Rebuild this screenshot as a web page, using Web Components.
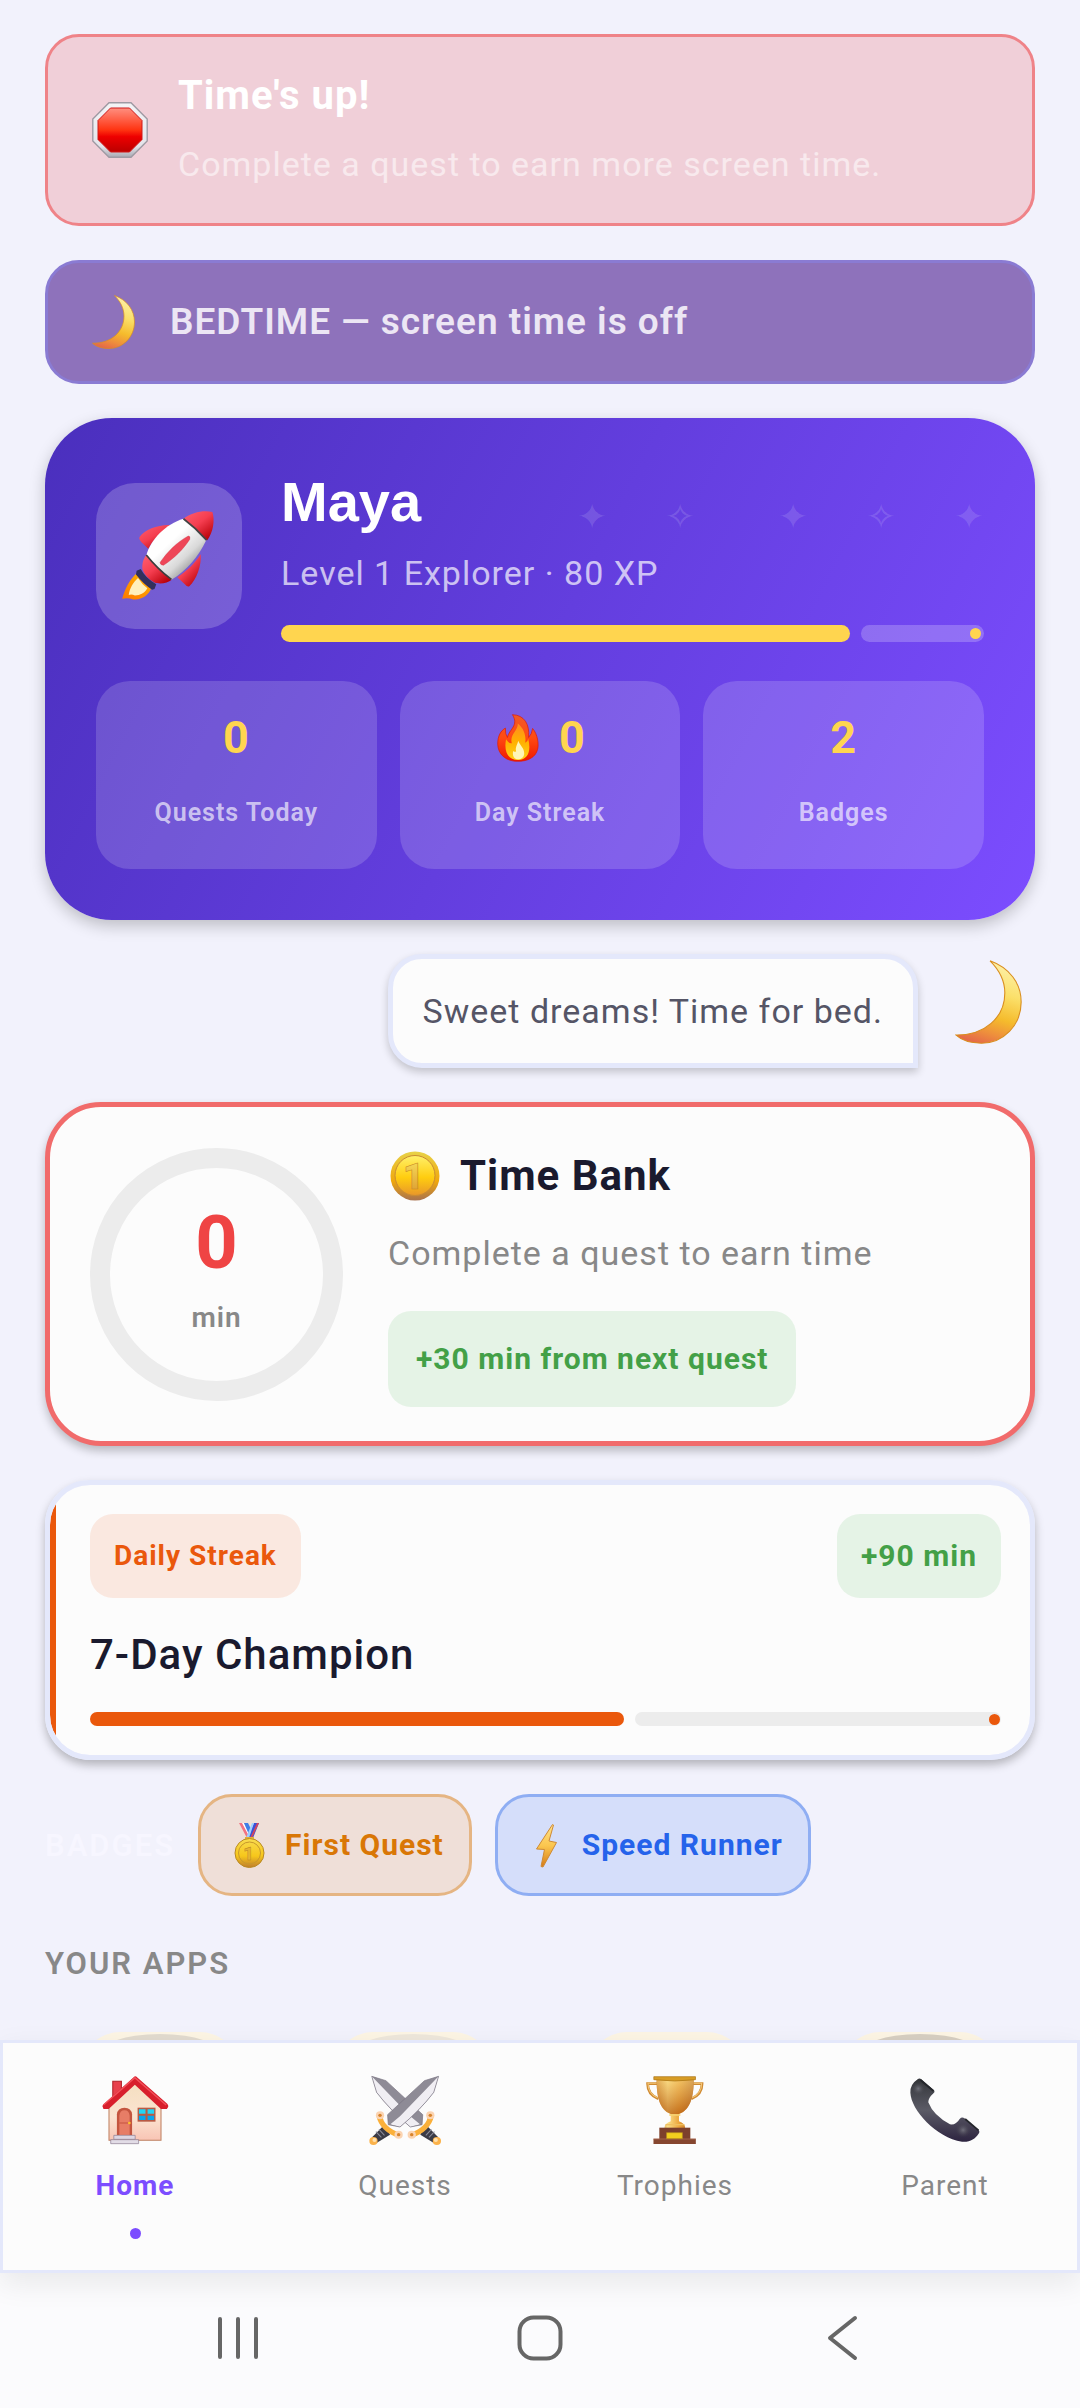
<!DOCTYPE html>
<html lang="en">
<head>
<meta charset="utf-8">
<meta name="viewport" content="width=device-width, initial-scale=1">
<title>Quest Home</title>
<style>
  html, body {
    height: 100%;
    margin: 0;
  }

  body {
    --border: #e4e8fb;
    --surface: #fcfcfc;
    --muted: #888888;
    --ink: #1a1a2e;
    --purple: #7c4dff;
    --gold: #ffd54f;
    --orange: #ea580c;
    background: #f2f2fc;
    color: var(--ink);
    font-family: Roboto, "Liberation Sans", sans-serif;
    letter-spacing: 1px;
  }
</style>
</head>
<body>
<quest-app>
  <alert-banner tone="danger">
    <emoji-icon slot="icon" name="stop"></emoji-icon>
    <span slot="title">Time's up!</span>
    <span slot="text">Complete a quest to earn more screen time.</span>
  </alert-banner>

  <alert-banner tone="night">
    <emoji-icon slot="icon" name="moon"></emoji-icon>
    <span slot="title">BEDTIME — screen time is off</span>
  </alert-banner>

  <hero-card>
    <emoji-icon slot="avatar" name="rocket"></emoji-icon>
    <span slot="name">Maya</span>
    <span slot="level">Level 1 Explorer · 80 XP</span>
    <stat-tile>0<span slot="label">Quests Today</span></stat-tile>
    <stat-tile><emoji-icon name="fire"></emoji-icon>0<span slot="label">Day Streak</span></stat-tile>
    <stat-tile>2<span slot="label">Badges</span></stat-tile>
  </hero-card>

  <speech-bubble>Sweet dreams! Time for bed.<emoji-icon slot="speaker" name="moon"></emoji-icon></speech-bubble>

  <time-bank minutes="0">
    <emoji-icon slot="icon" name="coin"></emoji-icon>
    <span slot="title">Time Bank</span>
    <span slot="text">Complete a quest to earn time</span>
    <span slot="reward">+30 min from next quest</span>
  </time-bank>

  <quest-card>
    <span slot="kind">Daily Streak</span>
    <span slot="reward">+90 min</span>
    <span slot="title">7-Day Champion</span>
  </quest-card>

  <badge-row>
    <badge-chip tone="amber"><emoji-icon slot="icon" name="medal"></emoji-icon>First Quest</badge-chip>
    <badge-chip tone="blue"><emoji-icon slot="icon" name="bolt"></emoji-icon>Speed Runner</badge-chip>
  </badge-row>

  <app-section>YOUR APPS</app-section>

  <nav-bar slot="nav">
    <nav-item active href="#home"><emoji-icon slot="icon" name="house"></emoji-icon>Home</nav-item>
    <nav-item href="#quests"><emoji-icon slot="icon" name="swords"></emoji-icon>Quests</nav-item>
    <nav-item href="#trophies"><emoji-icon slot="icon" name="trophy"></emoji-icon>Trophies</nav-item>
    <nav-item href="#parent"><emoji-icon slot="icon" name="phone"></emoji-icon>Parent</nav-item>
  </nav-bar>
  <system-bar slot="nav"></system-bar>
</quest-app>

<script>
// Small helper: every element clones its own template into an open shadow root.
function makeTemplate(html) {
  const template = document.createElement('template');
  template.innerHTML = html;
  return template;
}

class BaseElement extends HTMLElement {
  constructor() {
    super();
    const shadow = this.attachShadow({ mode: 'open' });
    shadow.appendChild(this.constructor.template.content.cloneNode(true));
  }
}

// ---------- icons ----------
const ICONS = {
  stop: `<svg viewBox="0 0 56 56">
    <defs>
      <linearGradient id="rim" x2="0" y2="1"><stop offset="0" stop-color="#f4f4f6"/><stop offset=".8" stop-color="#e4e4ea"/><stop offset="1" stop-color="#a9a9b3"/></linearGradient>
      <linearGradient id="red" x2="0" y2="1"><stop offset="0" stop-color="#ff8f80"/><stop offset=".5" stop-color="#ff3311"/><stop offset=".65" stop-color="#ee0000"/><stop offset="1" stop-color="#bb0000"/></linearGradient>
    </defs>
    <path d="M17 .8h22L55.2 17v22L39 55.2H17L.8 39V17Z" fill="url(#rim)" stroke="#9f9aa3" stroke-width="1.4"/>
    <path d="M18.500 6h19L50 18.500v19L37.500 50h-19L6 37.500v-19Z" fill="url(#red)" stroke="#d01818"/>
  </svg>`,

  moon: `<svg viewBox="0 0 43 54">
    <defs>
      <linearGradient id="m" x1=".6" y1="0" x2=".35" y2="1"><stop offset="0" stop-color="#fdf0a8"/><stop offset=".35" stop-color="#fbe06a"/><stop offset=".65" stop-color="#f5bb2c"/><stop offset=".85" stop-color="#ee8f3c"/><stop offset="1" stop-color="#e56a48"/></linearGradient>
    </defs>
    <path d="M22.500.5C35 5 42.500 15 42.500 27 42.500 42 31 53.500 17 53.500 10 53.500 4 51.500.5 48.200 19 48.500 32 37 32 21 32 13 28 6 22.500.5Z" fill="url(#m)" stroke="#d98e1f" stroke-width=".7"/>
  </svg>`,

  rocket: `<svg viewBox="192 241 424 424">
    <defs>
      <linearGradient id="rr" x2=".8" y2="1"><stop offset="0" stop-color="#ff6070"/><stop offset=".5" stop-color="#f53e50"/><stop offset="1" stop-color="#b80008"/></linearGradient>
      <linearGradient id="rw" x1=".2" y1=".2" x2=".8" y2=".85"><stop offset=".3" stop-color="#ffffff"/><stop offset=".7" stop-color="#d9d9d9"/><stop offset="1" stop-color="#8d8d8d"/></linearGradient>
      <linearGradient id="rf" x1=".8" x2=".1" y2="1"><stop offset="0" stop-color="#ffb300"/><stop offset="1" stop-color="#ff7a00"/></linearGradient>
    </defs>
    <path d="M310 503C290 520 275 550 268 577q17-4 32 2c25 3 45-14 52-31Q325 530 310 503Z" fill="url(#rf)"/>
    <path d="M314 517c-14 12-24 30-27 49q9-3 18 2c15 0 30-8 36-21Q325 535 314 517Z" fill="#fff0bd"/>
    <path d="M412 363c-37-3-77 12-93 34q-4 6 5 16l20 19C360 402 385 380 412 363Z" fill="url(#rr)"/>
    <path d="M496 448c3 32-12 74-33 93q-6 3-13-6l-22-20c30-20 52-42 68-67Z" fill="url(#rr)"/>
    <path d="M338 450q32 42 74 72c-12 11-37 13-50 8Q335 515 327 492C325 475 330 460 338 450Z" fill="url(#rr)"/>
    <path d="M322 491l-12 5-2 11q22 28 47 44l7-2 5-14Q335 517 322 491Z" fill="#33305c"/>
    <path d="M446 345q36 27 66 62c-22 48-57 88-101 115q-41-32-73-70C350 405 395 360 446 345Z" fill="url(#rw)"/>
    <path d="M338 450q32 40 73 71" fill="none" stroke="#3c3c3c" stroke-width="5"/>
    <path d="M446 345c24-19 58-26 84-20 8 24 2 60-15 82q-33-36-69-62Z" fill="url(#rr)"/>
    <path d="M446 345q36 27 67 62" fill="none" stroke="#444" stroke-width="5"/>
    <path d="M460 395q7 0 4 10c-18 28-44 54-76 75q-9 0-10-8c20-30 50-60 82-77Z" fill="#ee4658" stroke="#c82536"/>
  </svg>`,

  fire: `<svg viewBox="1359 910 125 143">
    <defs>
      <linearGradient id="fo" x2="0" y2="1"><stop offset="0" stop-color="#f05a28"/><stop offset=".5" stop-color="#ff4a12"/><stop offset="1" stop-color="#f01800"/></linearGradient>
      <linearGradient id="fy" x2="0" y2="1"><stop offset="0" stop-color="#ff8a20"/><stop offset=".5" stop-color="#ffb000"/><stop offset="1" stop-color="#ffd21a"/></linearGradient>
    </defs>
    <path d="M1405 912c35 1 52 28 48 68q10-10 12-27c15 17 19 47 15 62-6 25-30 36-60 36-35 0-58-21-59-51 0-25 9-40 23-48q-1 18 6 28c5-25 35-35 15-68Z" fill="url(#fo)" stroke="#e01800" stroke-width="2"/>
    <path d="M1421 938c20 16 25 40 22 58q8-4 9-12c9 36 0 62-30 63-32 0-43-27-36-62q9 14 17 12c-7-26 18-36 18-59Z" fill="url(#fy)"/>
    <path d="M1422 990c6 15 18 22 18 37 0 12-9 18-18 18-12 0-18-11-15-25q6 5 9 1c-4-11 5-21 6-31Z" fill="#fff6b8"/>
  </svg>`,

  coin: `<svg viewBox="0 0 50 50">
    <defs><linearGradient id="c" x2="0" y2="1"><stop offset="0" stop-color="#fff06a"/><stop offset=".55" stop-color="#ffcd0f"/><stop offset="1" stop-color="#e8962a"/></linearGradient>
    <linearGradient id="ce" x2="0" y2="1"><stop offset="0" stop-color="#e8d248"/><stop offset=".6" stop-color="#f0a80c"/><stop offset="1" stop-color="#a9724e"/></linearGradient>
    <linearGradient id="cn" x2="0" y2="1"><stop offset="0" stop-color="#fbe45c"/><stop offset="1" stop-color="#d8932c"/></linearGradient></defs>
    <circle cx="25" cy="25" r="24.500" fill="url(#ce)"/>
    <circle cx="25" cy="24.500" r="20" fill="url(#c)" stroke="#c98a34"/>
    <text x="23.500" y="38" text-anchor="middle" font-family="Roboto" font-weight="900" font-size="36" letter-spacing="0" fill="url(#cn)" stroke="#c98a24" stroke-width=".6">1</text>
  </svg>`,

  medal: `<svg viewBox="0 0 31 45">
    <defs><linearGradient id="d" x2="0" y2="1"><stop offset="0" stop-color="#f8dc50"/><stop offset=".6" stop-color="#f7c71b"/><stop offset="1" stop-color="#c07d2c"/></linearGradient></defs>
    <path d="M5 0h6l8 15h-6Z" fill="#f27282"/><path d="M8 0h2l8 15h-2Z" fill="#fff"/><path d="M10 0h4l4 8-2 6Z" fill="#3f7fe8"/>
    <path d="M25 0h-5l-7 15h6Z" fill="#3a50d8"/><path d="M20 0h-2l-6 15h3Z" fill="#9fd0ff"/><path d="M25 0h-2l-7 15h2Z" fill="#d6455c"/>
    <path d="M11 14h9v3h-9Z" fill="#e2b03a"/>
    <circle cx="15.500" cy="30" r="14.500" fill="url(#d)" stroke="#b98a22"/>
    <circle cx="15.500" cy="30" r="11" fill="none" stroke="#c7982c"/>
    <text x="14.500" y="36.500" text-anchor="middle" font-family="Roboto" font-weight="900" font-size="18" letter-spacing="0" fill="#e6b432" stroke="#b98320" stroke-width=".4">1</text>
  </svg>`,

  bolt: `<svg viewBox="0 0 31 45">
    <defs><linearGradient id="b" x2="0" y2="1"><stop offset="0" stop-color="#ffe28a"/><stop offset=".5" stop-color="#fbc64e"/><stop offset="1" stop-color="#d57a18"/></linearGradient></defs>
    <path d="M21.500 1.500 5.500 26l8 .5-3.500 17 2 .5L25.500 19.500l-7.500-1.500 4.500-16Z" fill="url(#b)" stroke="#cf8a35"/>
  </svg>`,

  house: `<svg viewBox="289 222 209 216" preserveAspectRatio="none">
    <defs><linearGradient id="w" x2="0" y2="1"><stop offset="0" stop-color="#f4dfc0"/><stop offset=".6" stop-color="#fbe3d0"/><stop offset="1" stop-color="#f8c4b4"/></linearGradient></defs>
    <path d="M329 244h25v35l-25 20Z" fill="#e8404c" stroke="#b02028" stroke-width="3"/>
    <path d="M393 245l76 66v110H318V311Z" fill="url(#w)" stroke="#bf8062" stroke-width="3"/>
    <path d="M393 229q4 0 8 4l86 78q4 4 3 9l-4 7h-17l-76-73-76 73h-15l-3-8q0-4 5-8l84-78q4-4 8-4Z" fill="#d81f2c"/>
    <path d="M302 315l91-82 91 82" fill="none" stroke="#f2505a" stroke-width="4"/>
    <path d="M341 405v-62q2-20 22-20t22 20v62Z" fill="#c4553f"/>
    <path d="M348 405v-58q2-16 15-16t15 16v58Z" fill="#e77d66"/>
    <path d="M348 369h30" stroke="#c4553f" stroke-width="3"/><circle cx="377" cy="369" r="4" fill="#ffc22e"/>
    <path d="M401 323h52v42h-52Z" fill="#b85a44"/>
    <path d="M405 328h19v13h-19Zm25 0h19v13h-19Z" fill="#22d4f4"/><path d="M405 347h19v13h-19Zm25 0h19v13h-19Z" fill="#08a6ee"/>
    <path d="M332 406h62v12h-62Z" fill="#ded6e2" stroke="#8a7a90" stroke-width="2"/><path d="M323 419h81v12h-81Z" fill="#e2dce6" stroke="#8a7a90" stroke-width="2"/>
  </svg>`,

  swords: `<svg viewBox="1073 222 209 216" preserveAspectRatio="none">
    <defs><g id="s">
      <path d="M1230 384l14 -4 30 32-14 16-38-24Z" fill="#3b3b46"/>
      <path d="M1238 406l16-18M1247 412l16-17" stroke="#8c8c99" stroke-width="3"/>
      <circle cx="1270" cy="423" r="12" fill="#fbb24a"/><circle cx="1267" cy="420" r="6" fill="#ffe0ae"/>
      <path d="M1081 229l41 13 107 102-2 30-34 7q-60-52-98-104Z" fill="#8e8b96"/>
      <path d="M1081 229l112 120 28 24-28 8q-56-48-98-104Z" fill="#f0eef3"/>
      <path d="M1081 229l41 13 107 102-2 30-34 7q-60-52-98-104Z" fill="none" stroke="#77717f" stroke-width="2"/>
      <path d="M1244 344c0 24-20 42-50 54q-6 10 3 16c34-12 60-36 64-66Z" fill="#fbb03a"/>
      <circle cx="1251" cy="346" r="12" fill="#fbd4b2"/><circle cx="1197" cy="404" r="12" fill="#fbd4b2"/>
      <circle cx="1251" cy="346" r="5" fill="#d8842c"/><circle cx="1197" cy="404" r="5" fill="#d8842c"/>
    </g></defs>
    <use href="#s"/>
    <use href="#s" transform="translate(2356 0) scale(-1 1)"/>
  </svg>`,

  trophy: `<svg viewBox="289 222 209 216" preserveAspectRatio="none">
    <defs><linearGradient id="g"><stop offset="0" stop-color="#c06a1c"/><stop offset=".3" stop-color="#fbe08a"/><stop offset=".6" stop-color="#eca63c"/><stop offset="1" stop-color="#a8581a"/></linearGradient>
    <linearGradient id="gd" x2="0" y2="1"><stop offset="0" stop-color="#fbd980" stop-opacity=".6"/><stop offset="1" stop-color="#b4580c" stop-opacity=".7"/></linearGradient></defs>
    <path d="M346 251h-32q0 32 31 45M440 251h32q0 32-31 45" fill="none" stroke="#d08a32" stroke-width="8"/>
    <path d="M345 250h-30q0 32 28 43M441 250h30q0 32-28 43" fill="none" stroke="#f4c878" stroke-width="3"/>
    <path d="M340 236h108c0 50-8 92-43 106v22q18 6 18 20h-60q0-14 18-20v-22c-34-14-41-56-41-106Z" fill="url(#g)"/>
    <path d="M340 236h108c0 50-8 92-43 106h-24c-34-14-41-56-41-106Z" fill="url(#gd)"/>
    <path d="M332 230h121v9q-60 8-121 0Z" fill="#d79c24" stroke="#a87014" stroke-width="2"/>
    <path d="M377 345h32" stroke="#f6d070" stroke-width="5"/><path d="M366 374h55" stroke="#f0c060" stroke-width="4"/>
    <path d="M348 383h90v35h-90Z" fill="#7d402c"/><path d="M331 416h123v16H331Z" fill="#86462f"/><path d="M331 417h123" stroke="#b0705a" stroke-width="2"/>
    <path d="M369 398h46v18h-46Z" fill="#f2cf1e" stroke="#b58a1c" stroke-width="2"/>
  </svg>`,

  phone: `<svg viewBox="1073 222 209 216" preserveAspectRatio="none">
    <defs><linearGradient id="p" x2="0" y2="1"><stop offset="0" stop-color="#333539"/><stop offset=".5" stop-color="#5b5b66"/><stop offset="1" stop-color="#2d2440"/></linearGradient>
    <radialGradient id="ps"><stop offset="0" stop-color="#7e7e88" stop-opacity=".8"/><stop offset="1" stop-color="#44444c" stop-opacity="0"/></radialGradient></defs>
    <path d="M1098 238q5-5 11 0l35 31q6 5 0 11-15 14-15 27 15 40 63 66 17 3 28-16 6-7 13-3l41 35q6 5 1 12c-10 16-25 26-48 24-75-12-148-95-150-147q-1-25 21-40Z" fill="url(#p)"/>
    <circle cx="1100" cy="266" r="20" fill="url(#ps)"/><circle cx="1230" cy="390" r="22" fill="url(#ps)"/>
    <path d="M1106 240l38 33M1236 357l39 34" stroke="#24262b" stroke-width="5"/>
  </svg>`
};

class EmojiIcon extends BaseElement {
  static template = makeTemplate(`
    <style>
      :host { display: block; flex: none; width: 60px; height: 60px; }
      svg { display: block; width: 100%; height: 100%; }
    </style>
  `);

  connectedCallback() {
    const icon = makeTemplate(ICONS[this.getAttribute('name')]);
    this.setAttribute('aria-hidden', 'true');
    this.shadowRoot.appendChild(icon.content);
  }
}

// ---------- page shell ----------
class QuestApp extends BaseElement {
  static template = makeTemplate(`
    <style>
      :host { display: flex; flex-direction: column; height: 100vh; }
      main {
        display: flex;
        flex: 1;
        flex-direction: column;
        gap: 34px;
        min-height: 0;
        overflow: hidden;
        padding: 34px 45px 0;
      }
    </style>
    <main><slot></slot></main>
    <slot name="nav"></slot>
  `);
}

class AlertBanner extends BaseElement {
  static template = makeTemplate(`
    <style>
      :host {
        display: flex;
        align-items: center;
        flex: none;
        gap: 28px;
        padding: 31px 42px;
        border: 3px solid #ef8388;
        border-radius: 34px;
        background: #f0cfd8;
        color: #ffffff;
        line-height: 56px;
      }
      :host([tone="night"]) {
        border-color: #8a7bd3;
        background: #8e72bb;
        color: #ece6f4;
      }
      ::slotted([slot="icon"]) { width: 56px; height: 56px; padding: 0 2px; }
      :host([tone="night"]) ::slotted([slot="icon"]) { width: 43px; height: 54px; padding-right: 7px; }
      .copy { display: flex; flex-direction: column; gap: 12px; }
      .title { font-size: 40px; font-weight: 700; }
      :host([tone="night"]) .title { font-size: 37px; font-weight: 600; }
      ::slotted([slot="text"]) { display: block; font-size: 34px; color: #f8e9ed; }
    </style>
    <slot name="icon"></slot>
    <div class="copy">
      <div class="title"><slot name="title"></slot></div>
      <slot name="text"></slot>
    </div>
  `);
}

// Bar with a separate track and a stop dot at its end.
class ProgressLine extends BaseElement {
  static template = makeTemplate(`
    <style>
      :host { display: flex; gap: 11px; height: var(--size, 17px); }
      div { border-radius: 9px; }
      .done { background: var(--fill); }
      .rest {
        display: flex;
        flex: 1;
        align-items: center;
        justify-content: flex-end;
        background: var(--track);
      }
      .dot { width: 11px; height: 11px; margin-right: var(--dot-gap, 3px); background: var(--fill); }
    </style>
    <div class="done"></div>
    <div class="rest"><div class="dot"></div></div>
  `);

  connectedCallback() {
    const value = this.getAttribute('value');
    this.setAttribute('role', 'progressbar');
    this.setAttribute('aria-valuenow', value);
    this.shadowRoot.querySelector('.done').style.width = value + '%';
  }
}

class HeroCard extends BaseElement {
  static template = makeTemplate(`
    <style>
      :host {
        display: flex;
        flex: none;
        flex-direction: column;
        gap: 39px;
        padding: 51px;
        border-radius: 67px;
        background: linear-gradient(117deg, #4a2fbd, #7c4dff);
        box-shadow: 0 6px 16px rgba(0, 0, 0, 0.22);
        color: #ffffff;
      }
      .top { display: flex; align-items: center; gap: 39px; }
      ::slotted([slot="avatar"]) {
        width: 146px;
        height: 146px;
        border-radius: 39px;
        background: rgba(255, 255, 255, 0.2);
      }
      .who { position: relative; flex: 1; }
      .name {
        font: 700 56px/66px "Liberation Sans", Arial, sans-serif;
        letter-spacing: 0;
      }
      .level {
        margin: 10px 0 24px;
        font-size: 34px;
        line-height: 56px;
        color: rgba(255, 255, 255, 0.7);
      }
      .stars {
        position: absolute;
        top: 28px;
        right: 0;
        display: flex;
        gap: 58px;
        font: 36px/40px "DejaVu Sans", sans-serif;
        letter-spacing: 0;
        color: rgba(255, 255, 255, 0.14);
      }
      .stars span { width: 30px; text-align: center; }
      .stars span:nth-child(3) { margin-left: 25px; }
      .stats { display: grid; grid-template-columns: repeat(3, 1fr); gap: 23px; }
      progress-line { --fill: var(--gold); --track: rgba(255, 255, 255, 0.22); }
    </style>
    <div class="top">
      <slot name="avatar"></slot>
      <div class="who">
        <div class="stars"><span>✦</span><span>✧</span><span>✦</span><span>✧</span><span>✦</span></div>
        <div class="name"><slot name="name"></slot></div>
        <div class="level"><slot name="level"></slot></div>
        <progress-line value="81"></progress-line>
      </div>
    </div>
    <div class="stats"><slot></slot></div>
  `);
}

class StatTile extends BaseElement {
  static template = makeTemplate(`
    <style>
      :host {
        display: block;
        padding: 28px 0;
        border-radius: 34px;
        background: rgba(255, 255, 255, 0.16);
        text-align: center;
      }
      .value {
        display: flex;
        align-items: center;
        justify-content: center;
        gap: 17px;
        font-size: 45px;
        font-weight: 700;
        line-height: 57px;
        color: var(--gold);
      }
      ::slotted(emoji-icon) { width: 48px; height: 48px; }
      .label {
        margin-top: 19px;
        font-size: 25px;
        font-weight: 600;
        line-height: 56px;
        color: rgba(255, 255, 255, 0.65);
      }
    </style>
    <div class="value"><slot></slot></div>
    <div class="label"><slot name="label"></slot></div>
  `);
}

class SpeechBubble extends BaseElement {
  static template = makeTemplate(`
    <style>
      :host {
        display: flex;
        flex: none;
        align-items: flex-start;
        justify-content: flex-end;
        gap: 37px;
      }
      p {
        margin: 0;
        padding: 24px 30px;
        border: 5px solid var(--border);
        border-radius: 34px 34px 0 34px;
        background: var(--surface);
        box-shadow: 0 4px 8px rgba(0, 0, 0, 0.2);
        font-size: 34px;
        line-height: 56px;
        color: #555566;
      }
      ::slotted(emoji-icon) { width: 67px; height: 84px; padding: 6px 13px 0 0; }
    </style>
    <p><slot></slot></p>
    <slot name="speaker"></slot>
  `);
}

class TimeBank extends BaseElement {
  static template = makeTemplate(`
    <style>
      :host {
        display: flex;
        flex: none;
        align-items: center;
        gap: 45px;
        padding: 35px 40px 34px;
        border: 5px solid #f16b6b;
        border-radius: 56px;
        background: var(--surface);
        box-shadow: 0 5px 10px rgba(0, 0, 0, 0.24);
      }
      .ring {
        display: flex;
        flex: none;
        flex-direction: column;
        align-items: center;
        justify-content: center;
        gap: 7px;
        width: 213px;
        height: 213px;
        border: 20px solid #ececec;
        border-radius: 50%;
      }
      .minutes { font-size: 74px; font-weight: 700; line-height: 80px; color: #ef4444; letter-spacing: 0; }
      .unit { font-size: 28px; font-weight: 600; line-height: 56px; color: var(--muted); }
      h2 {
        display: flex;
        align-items: center;
        gap: 20px;
        margin: 0;
        font-size: 42px;
        font-weight: 700;
        line-height: 67px;
      }
      ::slotted([slot="icon"]) { width: 50px; height: 50px; padding-left: 2px; }
      .text { margin: 16px 0 30px; font-size: 34px; line-height: 56px; color: var(--muted); }
      .reward {
        display: inline-block;
        padding: 20px 28px;
        border-radius: 23px;
        background: #e5f3e6;
        font-size: 30px;
        font-weight: 700;
        line-height: 56px;
        color: #43a047;
        vertical-align: top;
      }
    </style>
    <div class="ring"><span class="minutes"></span><span class="unit">min</span></div>
    <div>
      <h2><slot name="icon"></slot><slot name="title"></slot></h2>
      <div class="text"><slot name="text"></slot></div>
      <div class="reward"><slot name="reward"></slot></div>
    </div>
  `);

  connectedCallback() {
    this.shadowRoot.querySelector('.minutes').textContent = this.getAttribute('minutes');
  }
}

class QuestCard extends BaseElement {
  static template = makeTemplate(`
    <style>
      :host {
        display: block;
        flex: none;
        padding: 29px 29px 29px 40px;
        border: 5px solid var(--border);
        border-radius: 45px;
        background: linear-gradient(90deg, var(--orange) 6px, var(--surface) 6px) padding-box;
        box-shadow: 0 5px 10px rgba(0, 0, 0, 0.26);
      }
      .tags { display: flex; justify-content: space-between; }
      .tags div {
        padding: 14px 24px;
        border-radius: 23px;
        font-weight: 700;
        line-height: 56px;
      }
      .kind { background: #fae8e0; font-size: 28px; color: var(--orange); }
      .reward { background: #e5f3e6; font-size: 30px; color: #43a047; }
      h3 { margin: 23px 0; font-size: 42px; font-weight: 500; line-height: 68px; }
      progress-line { --size: 14px; --dot-gap: 1px; --fill: var(--orange); --track: #ececec; }
    </style>
    <div class="tags">
      <div class="kind"><slot name="kind"></slot></div>
      <div class="reward"><slot name="reward"></slot></div>
    </div>
    <h3><slot name="title"></slot></h3>
    <progress-line value="58.6"></progress-line>
  `);
}

class BadgeRow extends BaseElement {
  static template = makeTemplate(`
    <style>
      :host { display: flex; flex: none; align-items: center; gap: 23px; }
      .label { font-size: 31px; font-weight: 600; letter-spacing: 2px; color: #f7f6ff; }
    </style>
    <span class="label">BADGES</span>
    <slot></slot>
  `);
}

class BadgeChip extends BaseElement {
  static template = makeTemplate(`
    <style>
      :host {
        display: flex;
        align-items: center;
        gap: 20px;
        padding: 20px 25px 20px 33px;
        border: 3px solid #e5b583;
        border-radius: 34px;
        background: #efdfd8;
        font-size: 30px;
        font-weight: 700;
        line-height: 56px;
        color: #d97706;
      }
      :host([tone="blue"]) {
        border-color: #8faef3;
        background: #d5defa;
        color: #2563eb;
      }
      ::slotted(emoji-icon) { width: 31px; height: 45px; }
    </style>
    <slot name="icon"></slot>
    <span><slot></slot></span>
  `);
}

class AppSection extends BaseElement {
  static template = makeTemplate(`
    <style>
      :host { display: block; flex: none; }
      h2 {
        margin: 0 0 35px;
        font-size: 31px;
        font-weight: 600;
        line-height: 67px;
        letter-spacing: 2px;
        color: var(--muted);
      }
      .apps { display: grid; grid-template-columns: repeat(4, 1fr); gap: 23px; justify-items: center; }
      .app { width: 158px; height: 158px; border-radius: 39px; background: #fdf5e4; overflow: hidden; }
      .app i {
        display: block;
        width: 130px;
        height: 130px;
        margin: 2px auto;
        border-radius: 50% / 24px;
        background: var(--tile, transparent);
      }
    </style>
    <h2><slot></slot></h2>
    <div class="apps">
      <div class="app" style="--tile: #e2dbcf"><i></i></div>
      <div class="app" style="--tile: #eee7db"><i></i></div>
      <div class="app"><i></i></div>
      <div class="app" style="--tile: #d7cfc2"><i></i></div>
    </div>
  `);
}

// ---------- bottom bars ----------
class NavBar extends BaseElement {
  static template = makeTemplate(`
    <style>
      :host {
        position: relative;
        z-index: 1;
        display: block;
        flex: none;
        padding: 3px 0;
        background: var(--surface);
        box-shadow: inset 0 0 0 3px var(--border), 0 10px 28px rgba(0, 0, 0, 0.08);
      }
      nav { display: grid; grid-template-columns: repeat(4, 1fr); }
    </style>
    <nav><slot></slot></nav>
  `);
}

class NavItem extends BaseElement {
  static template = makeTemplate(`
    <style>
      :host { display: block; }
      a {
        display: flex;
        flex-direction: column;
        align-items: center;
        padding: 31px 0;
        font-size: 28px;
        line-height: 45px;
        color: var(--muted);
        text-decoration: none;
      }
      ::slotted(emoji-icon) { width: 72px; height: 72px; margin-bottom: 17px; }
      .dot { width: 11px; height: 11px; margin-top: 20px; border-radius: 50%; }
      :host([active]) a { font-weight: 700; color: var(--purple); }
      :host([active]) .dot { background: var(--purple); }
    </style>
    <a><slot name="icon"></slot><span><slot></slot></span><span class="dot"></span></a>
  `);

  connectedCallback() {
    this.shadowRoot.querySelector('a').href = this.getAttribute('href');
  }
}

class SystemBar extends BaseElement {
  static template = makeTemplate(`
    <style>
      :host {
        display: grid;
        flex: none;
        grid-template-columns: repeat(3, 1fr);
        justify-items: center;
        padding: 42px 8% 47px;
        background: #fbfbfd;
      }
      button { padding: 0; border: 0; background: none; }
      svg { display: block; width: 46px; height: 46px; fill: none; stroke: #666666; stroke-width: 4; stroke-linecap: round; stroke-linejoin: round; }
    </style>
    <button aria-label="Recent apps"><svg viewBox="0 0 46 46"><path d="M5 4v38M23 4v38M41 4v38"/></svg></button>
    <button aria-label="Home screen"><svg viewBox="0 0 46 46"><rect x="2.500" y="2.500" width="41" height="41" rx="14"/></svg></button>
    <button aria-label="Back"><svg viewBox="0 0 46 46"><path d="M36 3 11 23l25 20"/></svg></button>
  `);
}

customElements.define('emoji-icon', EmojiIcon);
customElements.define('progress-line', ProgressLine);
customElements.define('quest-app', QuestApp);
customElements.define('alert-banner', AlertBanner);
customElements.define('hero-card', HeroCard);
customElements.define('stat-tile', StatTile);
customElements.define('speech-bubble', SpeechBubble);
customElements.define('time-bank', TimeBank);
customElements.define('quest-card', QuestCard);
customElements.define('badge-row', BadgeRow);
customElements.define('badge-chip', BadgeChip);
customElements.define('app-section', AppSection);
customElements.define('nav-bar', NavBar);
customElements.define('nav-item', NavItem);
customElements.define('system-bar', SystemBar);
</script>
</body>
</html>
